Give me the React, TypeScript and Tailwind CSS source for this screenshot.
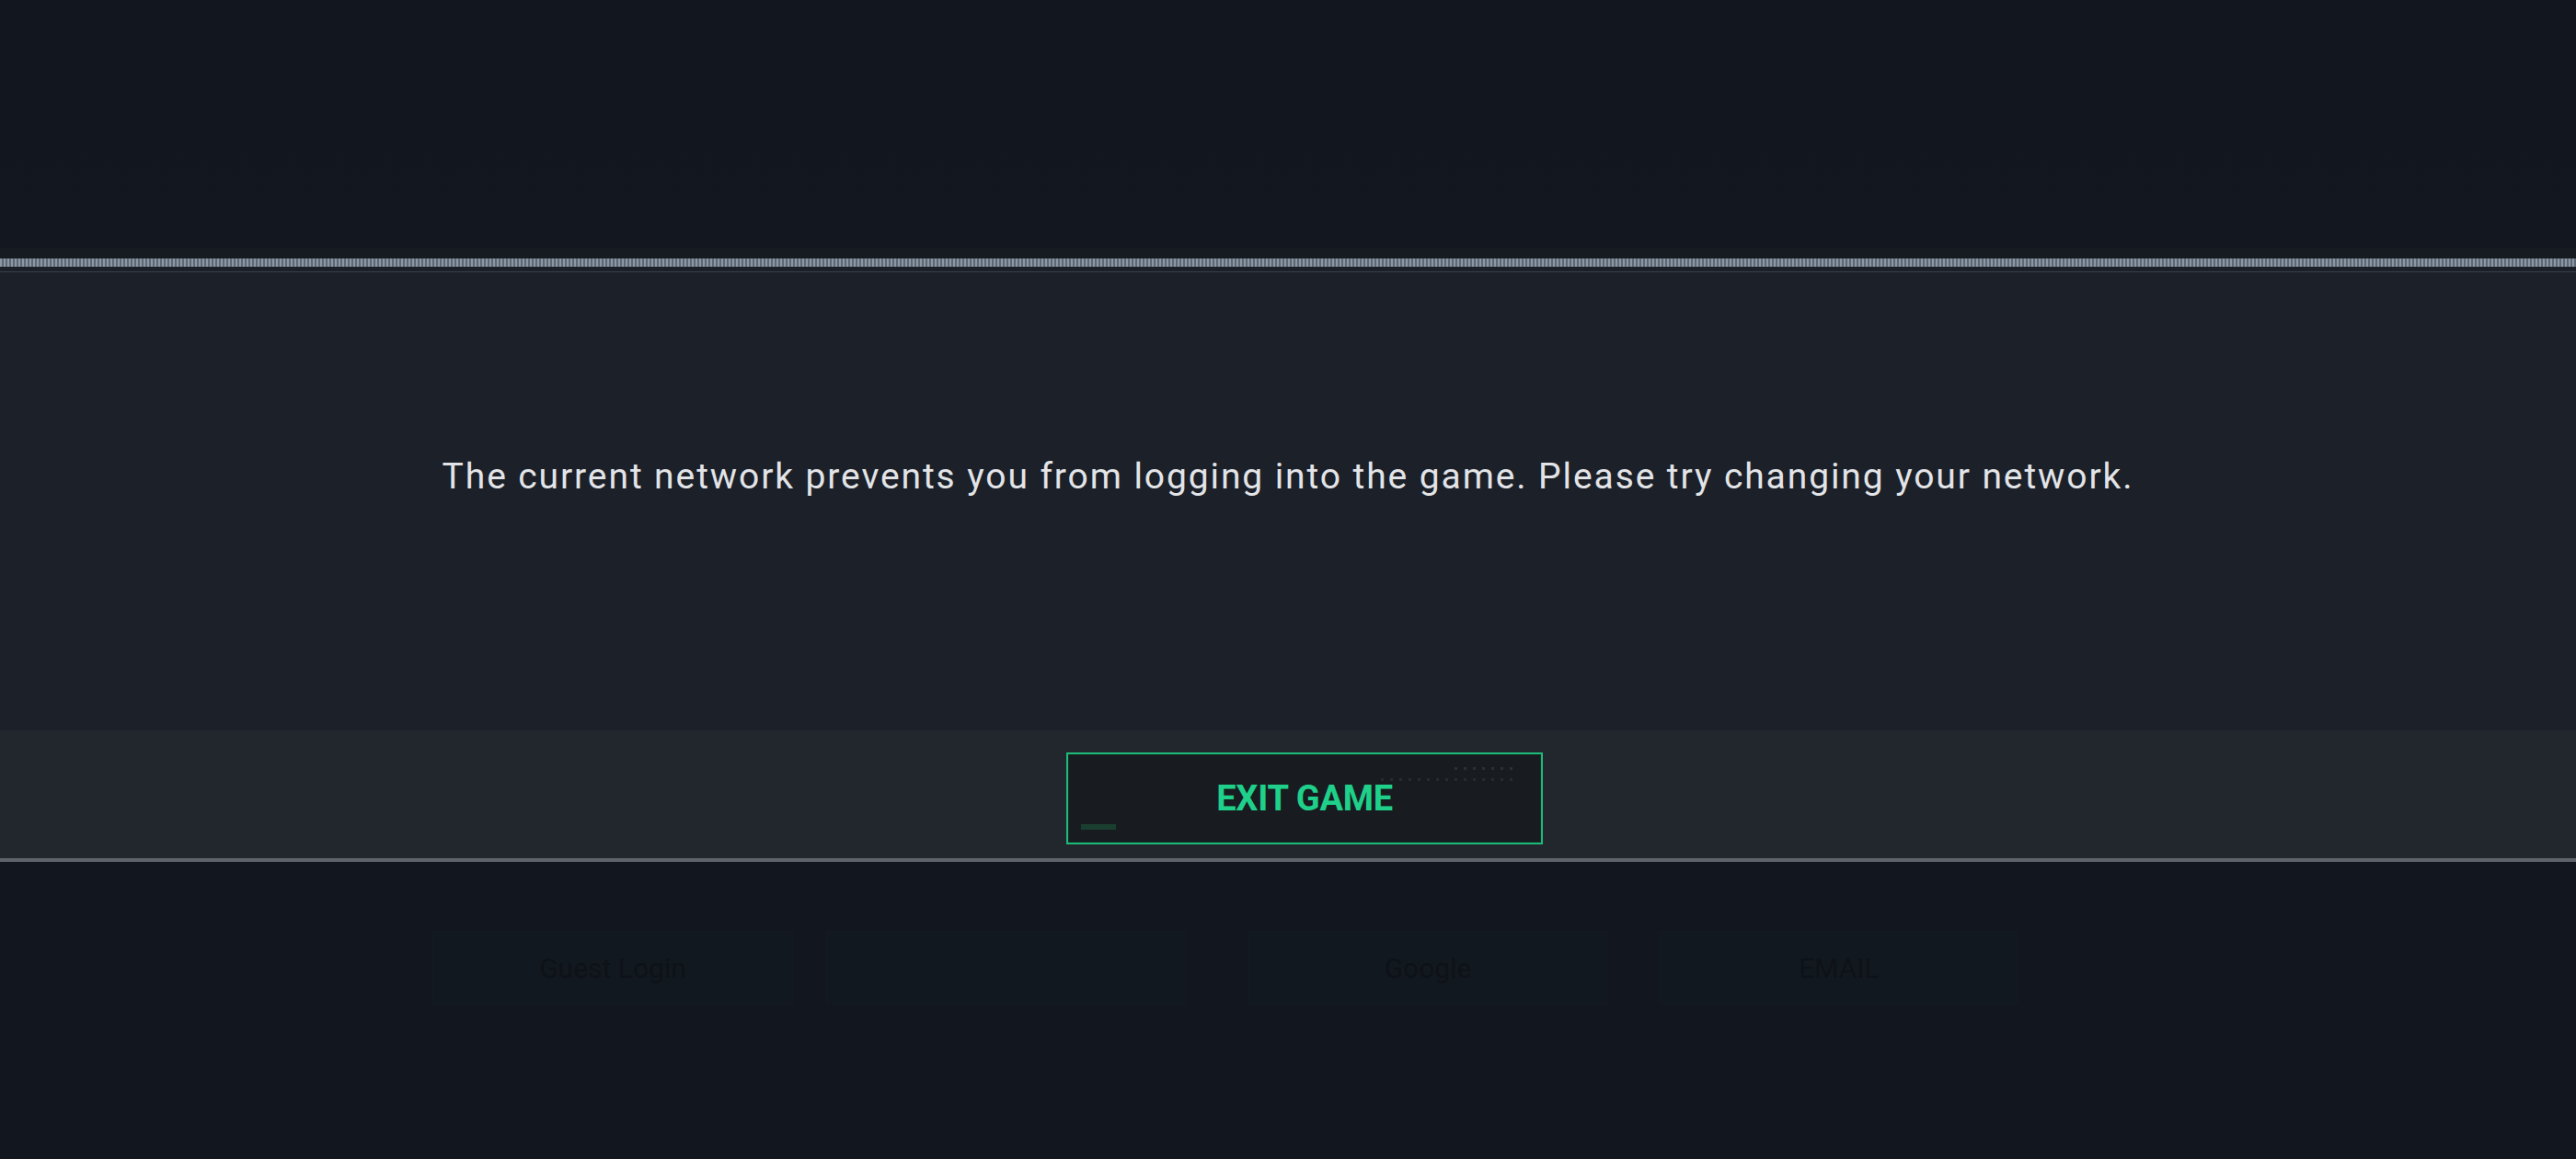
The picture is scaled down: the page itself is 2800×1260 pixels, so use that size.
import React from "react";

const ghostButtons = [
  { label: "Guest Login", cls: "ml-[470px] w-[392px]" },
  { label: "", cls: "ml-[36px] w-[392px]" },
  { label: "Google", cls: "ml-[67px] w-[390px]" },
  { label: "EMAIL", cls: "ml-[57px] w-[390px]" },
];

function ExitButton() {
  return (
    <button className="relative ml-[36px] flex h-[100px] w-[518px] items-center justify-center border-2 border-[#1fb97c] bg-[#181c21] shadow-[inset_0_0_0_1px_#10301f]">
      <span className="absolute right-[24px] top-[14px] h-[3px] w-[70px] bg-[repeating-linear-gradient(90deg,#2a3037_0px,#2a3037_3px,transparent_3px,transparent_10px)]" />
      <span className="absolute right-[24px] top-[26px] h-[3px] w-[150px] bg-[repeating-linear-gradient(90deg,#262b32_0px,#262b32_3px,transparent_3px,transparent_10px)]" />
      <span className="absolute bottom-[14px] left-[14px] h-[6px] w-[38px] bg-[#1a3f30]" />
      <span className="font-['Roboto',sans-serif] text-[38px] font-bold leading-none tracking-[-0.3px] text-[#1fd08a]">
        EXIT GAME
      </span>
    </button>
  );
}

export default function App() {
  return (
    <div className="flex h-[1260px] w-[2800px] flex-col overflow-hidden bg-[#11161e] font-['Roboto',sans-serif]">
      {/* top backdrop */}
      <div className="h-[270px] bg-[linear-gradient(180deg,#11161f_0%,#131820_100%)]" />
      <div className="h-[11px] bg-[#161b22]" />

      {/* stripe */}
      <div className="h-[9px] bg-[repeating-linear-gradient(90deg,#8b97a4_0px,#8b97a4_2px,#5e6874_2px,#5e6874_4px)]" />
      <div className="h-[5px] bg-[#1b1f27]" />
      <div className="h-px bg-[#3a414b]" />

      {/* dialog body */}
      <div className="flex h-[498px] items-start justify-center bg-[#1c2029] pt-[203px]">
        <p className="font-['Roboto',sans-serif] text-[39px] leading-none tracking-[1.9px] text-[#e2e4e7]">
          The current network prevents you from logging into the game. Please try changing your network.
        </p>
      </div>

      {/* dialog footer */}
      <div className="flex h-[143px] items-center justify-center border-b-[4px] border-[#5f636a] bg-[#22262d] pt-[8px]">
        <ExitButton />
      </div>

      {/* dimmed page behind */}
      <div className="flex flex-1 items-start bg-[#11161f] pt-[75px]">
        {ghostButtons.map((b, i) => (
          <div
            key={i}
            className={`flex h-[80px] shrink-0 ${b.cls} items-center justify-center border border-[#141a22] bg-[#12181f]`}
          >
            <span className="text-[30px] text-[#0e1218]">{b.label}</span>
          </div>
        ))}
      </div>
    </div>
  );
}
